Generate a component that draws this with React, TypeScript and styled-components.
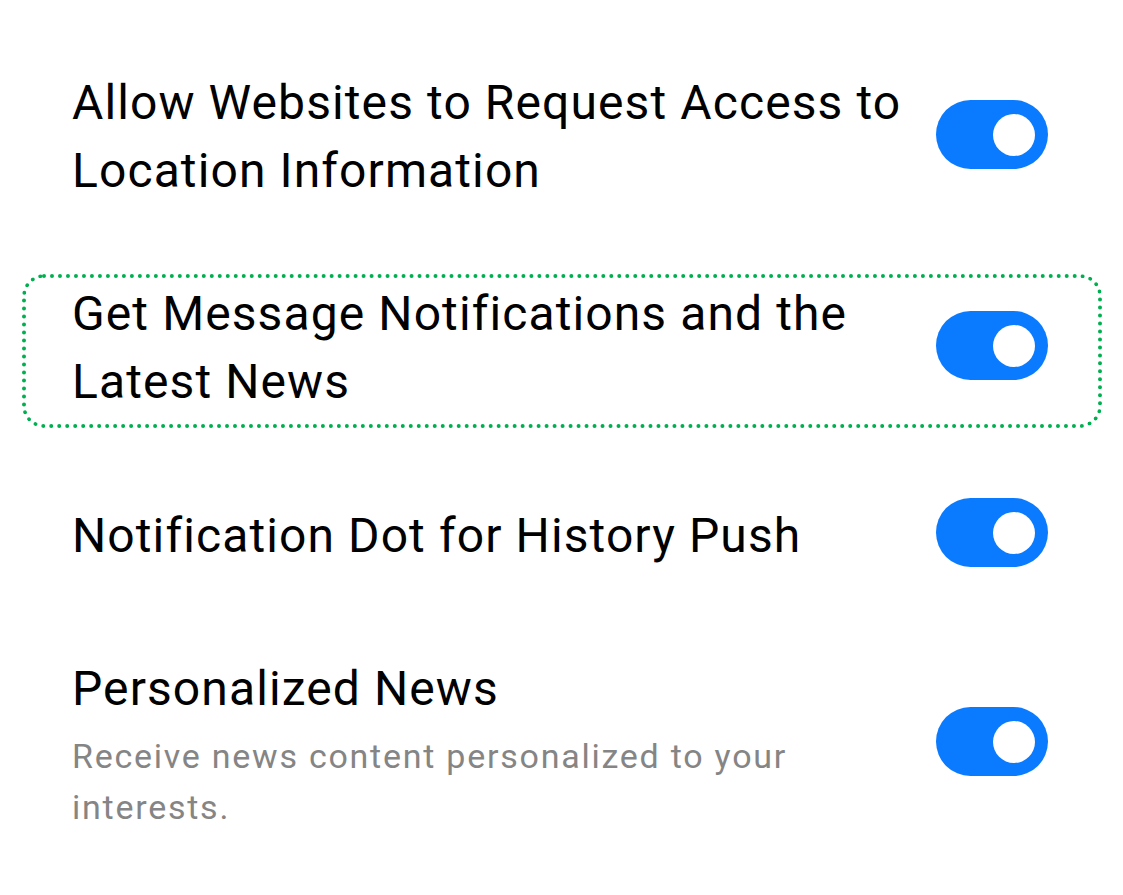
import styled, { createGlobalStyle } from 'styled-components';

const GlobalStyle = createGlobalStyle`
	html, body {
		margin: 0;
		padding: 0;
		background: #ffffff;
	}

	body {
		font-family: Roboto, 'Noto Sans', 'Liberation Sans', sans-serif;
		-webkit-font-smoothing: antialiased;
	}
`;

const SettingsList = styled.div`
	display: flex;
	flex-direction: column;
	padding-top: 27px;
	width: 1123px;
`;

const Row = styled.div<{ $tight?: boolean }>`
	position: relative;
	display: flex;
	align-items: center;
	gap: 24px;
	padding: 42px 75px ${({ $tight }) => ($tight ? '33px' : '40px')} 72px;
`;

const Highlight = styled.div`
	position: absolute;
	top: 36px;
	left: 22px;
	right: 21px;
	bottom: 28px;
	border: 4px dotted #00b050;
	border-radius: 22px;
	pointer-events: none;
`;

const TextColumn = styled.div`
	flex: 1;
	display: flex;
	flex-direction: column;
	gap: 8px;
`;

const Title = styled.div`
	color: #000000;
	font-size: 48px;
	line-height: 68px;
	font-weight: 400;
	letter-spacing: 1.1px;
`;

const Subtitle = styled.div`
	color: #858585;
	font-size: 34px;
	line-height: 51px;
	font-weight: 400;
	letter-spacing: 1.75px;
	padding-right: 40px;
`;

const Switch = styled.button<{ $on: boolean }>`
	position: relative;
	flex: 0 0 auto;
	width: 112px;
	height: 69px;
	margin-bottom: 6px;
	border: none;
	border-radius: 35px;
	padding: 0;
	background: ${({ $on }) => ($on ? '#0a7bff' : '#d4d4d4')};
	cursor: pointer;
`;

const Knob = styled.span<{ $on: boolean }>`
	position: absolute;
	top: 14px;
	${({ $on }) => ($on ? 'right: 13px;' : 'left: 13px;')}
	width: 42px;
	height: 42px;
	border-radius: 50%;
	background: #ffffff;
`;

type Setting = {
	id: string;
	title: string;
	description?: string;
	enabled: boolean;
	highlighted?: boolean;
};

const settings: Setting[] = [
	{ id: 'location', title: 'Allow Websites to Request Access to Location Information', enabled: true },
	{ id: 'notifications', title: 'Get Message Notifications and the Latest News', enabled: true, highlighted: true },
	{ id: 'dot', title: 'Notification Dot for History Push', enabled: true },
	{
		id: 'personalized',
		title: 'Personalized News',
		description: 'Receive news content personalized to your interests.',
		enabled: true,
	},
];

function App() {
	return (
		<>
			<GlobalStyle />
			<SettingsList>
				{settings.map((setting, index) => (
					<Row key={setting.id} $tight={index === 0}>
						{setting.highlighted && <Highlight />}
						<TextColumn>
							<Title>{setting.title}</Title>
							{setting.description && <Subtitle>{setting.description}</Subtitle>}
						</TextColumn>
						<Switch type="button" role="switch" aria-checked={setting.enabled} $on={setting.enabled}>
							<Knob $on={setting.enabled} />
						</Switch>
					</Row>
				))}
			</SettingsList>
		</>
	);
}

export default App;
